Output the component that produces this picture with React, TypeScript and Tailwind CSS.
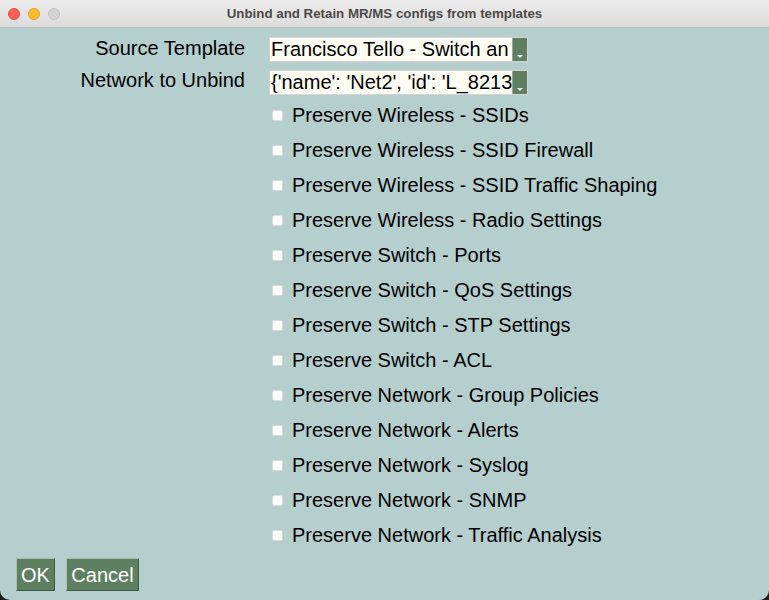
import React from "react";

const options = [
  "Preserve Wireless - SSIDs",
  "Preserve Wireless - SSID Firewall",
  "Preserve Wireless - SSID Traffic Shaping",
  "Preserve Wireless - Radio Settings",
  "Preserve Switch - Ports",
  "Preserve Switch - QoS Settings",
  "Preserve Switch - STP Settings",
  "Preserve Switch - ACL",
  "Preserve Network - Group Policies",
  "Preserve Network - Alerts",
  "Preserve Network - Syslog",
  "Preserve Network - SNMP",
  "Preserve Network - Traffic Analysis",
];

function SelectBox({ value }: { value: string }) {
  return (
    <div className="flex h-[25px] w-[259px] border border-[#d6d6cf] bg-[#fdfdf3]">
      <div className="flex-1 overflow-hidden whitespace-nowrap pl-[1px] text-[20px] leading-[23px] text-black">
        {value}
      </div>
      <div className="relative w-[15px] border-l border-[#9aa89a] bg-[#5f7f61]">
        <div className="absolute bottom-[3px] left-[4px] h-0 w-0 border-x-[3px] border-t-[3px] border-x-transparent border-t-white" />
      </div>
    </div>
  );
}

export default function App() {
  return (
    <div
      className="h-[600px] w-[769px] bg-[#1c1c1c]"
      style={{ fontFamily: '"Liberation Sans", Arial, sans-serif' }}
    >
      <div className="flex h-full w-full flex-col overflow-hidden rounded-b-[10px] bg-[#b5cece]">
        <div className="relative flex h-[28px] items-center justify-center border-b border-[#b9b9b9] bg-gradient-to-b from-[#ececec] to-[#dcdcdc]">
          <div className="absolute left-[8px] top-[8px] flex gap-[8px]">
            <div className="h-[12px] w-[12px] rounded-full border border-[#e24b43] bg-[#fe5f57]" />
            <div className="h-[12px] w-[12px] rounded-full border border-[#e0a225] bg-[#febc2e]" />
            <div className="h-[12px] w-[12px] rounded-full border border-[#c2c2c2] bg-[#d4d4d4]" />
          </div>
          <span className="text-[13.3px] font-bold text-[#4b4b4b]">
            Unbind and Retain MR/MS configs from templates
          </span>
        </div>

        <div className="flex flex-1 flex-col pt-[9px]">
          <div className="grid grid-cols-[245px_1fr] gap-x-[24px] gap-y-[8px]">
            <div className="text-right text-[20px] leading-[22px] text-black">Source Template</div>
            <SelectBox value="Francisco Tello - Switch an" />
            <div className="text-right text-[20px] leading-[20px] text-black">Network to Unbind</div>
            <SelectBox value="{'name': 'Net2', 'id': 'L_8213" />
          </div>

          <div className="mt-[2px] flex flex-col pl-[272px]">
            {options.map((o) => (
              <div key={o} className="flex h-[35px] items-center">
                <div className="mt-[2px] h-[11px] w-[11px] rounded-[2px] border border-[#dadada] bg-[#fbfbfb]" />
                <span className="ml-[9px] text-[20px] text-black">{o}</span>
              </div>
            ))}
          </div>

          <div className="mt-[6px] flex gap-[11px] pl-[16px]">
            <button className="h-[33px] w-[39px] border border-t-[#a9bfa9] border-l-[#a9bfa9] border-b-[#3f5a42] border-r-[#3f5a42] bg-[#5f7f61] text-[20px] text-white">
              OK
            </button>
            <button className="h-[33px] w-[73px] border border-t-[#a9bfa9] border-l-[#a9bfa9] border-b-[#3f5a42] border-r-[#3f5a42] bg-[#5f7f61] text-[20px] text-white">
              Cancel
            </button>
          </div>
        </div>
      </div>
    </div>
  );
}
